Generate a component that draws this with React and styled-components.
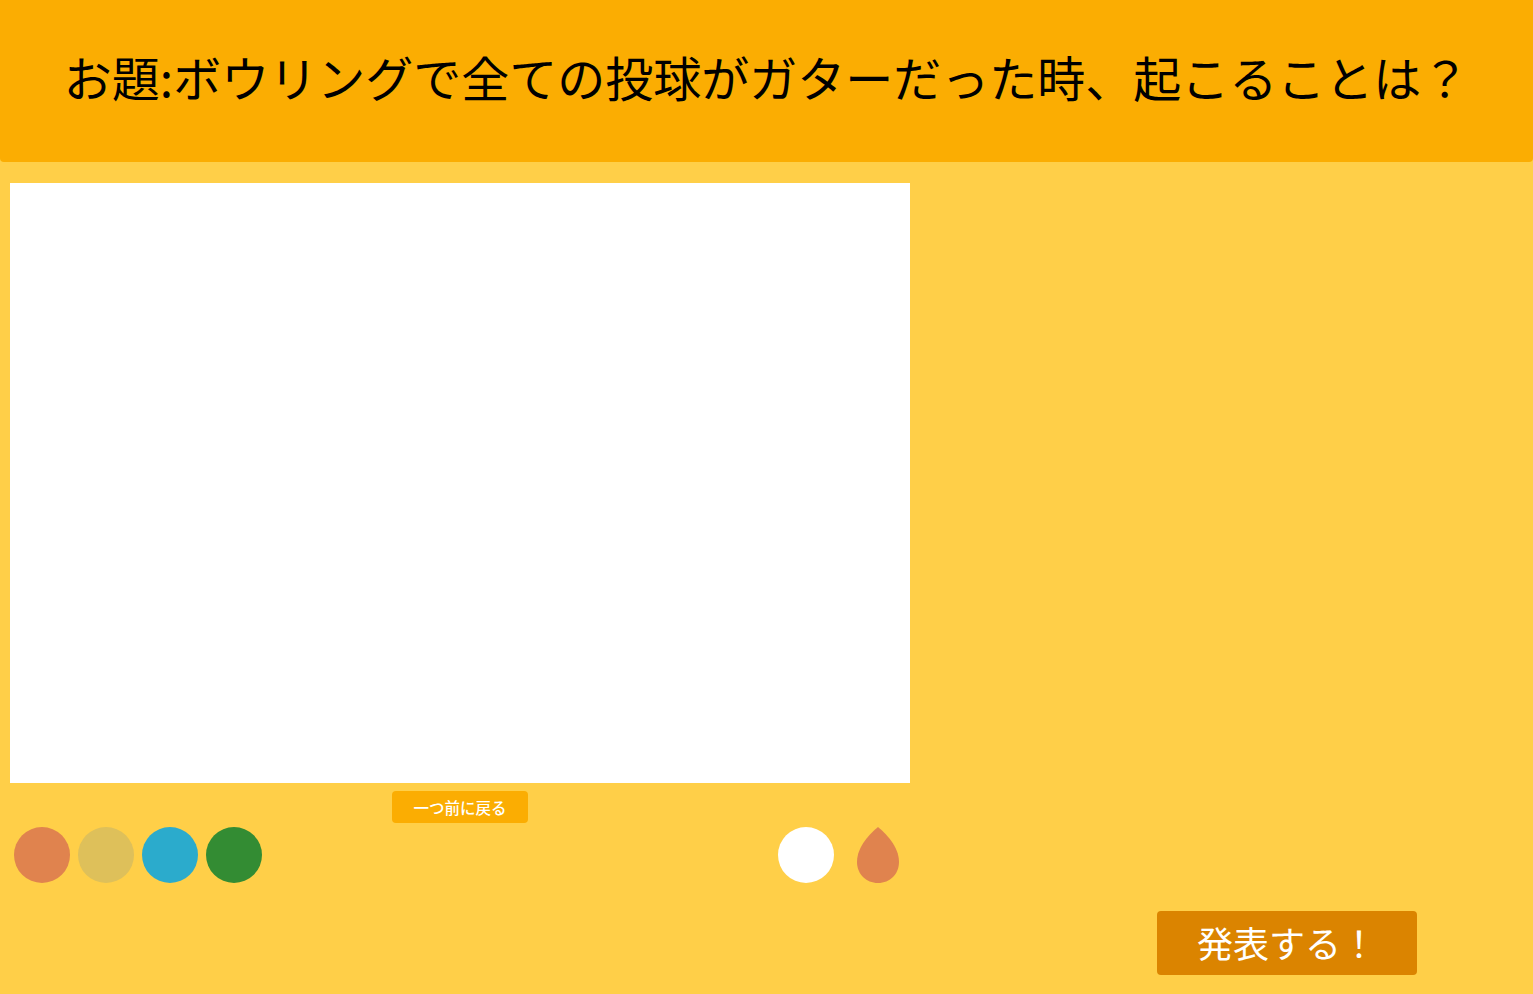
import React, { useState } from 'react'
import styled, { createGlobalStyle } from 'styled-components'

const GlobalStyle = createGlobalStyle`
  html, body {
    margin: 0;
    padding: 0;
    background: #ffcf48;
    font-family: "Noto Sans CJK JP", "Noto Sans", sans-serif;
  }
  * { box-sizing: border-box; }
`;

const colors = ["#e0834e", "#dec05a", "#2babcc", "#338c33"];

export default function App() {
  const [color, setColor] = useState(colors[0]);
  return (
    <Page>
      <GlobalStyle />
      <Header>
        <Title>お題:ボウリングで全ての投球がガターだった時、起こることは？</Title>
      </Header>
      <Main>
        <DrawColumn>
          <Canvas />
          <UndoButton>一つ前に戻る</UndoButton>
          <Palette>
            <Swatches>
              {colors.map((c) => (
                <Swatch key={c} color={c} onClick={() => setColor(c)} />
              ))}
            </Swatches>
            <Tools>
              <Swatch color="#ffffff" />
              <Drop viewBox="0 0 42 56">
                <path d="M21 0 C14 6 0 19 0 35 C0 47 9 56 21 56 C33 56 42 47 42 35 C42 19 28 6 21 0 Z" fill={color} />
              </Drop>
            </Tools>
          </Palette>
        </DrawColumn>
        <SideColumn>
          <SubmitButton>発表する！</SubmitButton>
        </SideColumn>
      </Main>
    </Page>
  )
}

const Page = styled.div`
  width: 100%;
  height: 994px;
  display: flex;
  flex-direction: column;
  overflow: hidden;
`;

const Header = styled.header`
  height: 162px;
  background: #fbad02;
  border-radius: 0 0 4px 4px;
  display: flex;
  align-items: center;
  justify-content: center;
  padding-bottom: 10px;
`;

const Title = styled.h1`
  margin: 0;
  font-size: 48px;
  font-weight: 400;
  color: #000;
  letter-spacing: 0;
`;

const Main = styled.main`
  flex: 1;
  display: flex;
`;

const DrawColumn = styled.div`
  width: 900px;
  margin-left: 10px;
  padding-top: 21px;
  display: flex;
  flex-direction: column;
  align-items: center;
`;

const Canvas = styled.div`
  width: 900px;
  height: 600px;
  background: #fff;
`;

const UndoButton = styled.button`
  margin-top: 8px;
  width: 136px;
  height: 32px;
  border: none;
  border-radius: 4px;
  background: #fbad02;
  color: #fff;
  font-family: inherit;
  font-size: 15.5px;
  font-weight: 500;
  cursor: pointer;
`;

const Palette = styled.div`
  width: 100%;
  margin-top: 4px;
  padding: 0 11px 0 4px;
  display: flex;
  justify-content: space-between;
  align-items: center;
`;

const Swatches = styled.div`
  display: flex;
  gap: 8px;
`;

const Tools = styled.div`
  display: flex;
  align-items: center;
  gap: 23px;
`;

const Swatch = styled.div`
  width: 56px;
  height: 56px;
  border-radius: 50%;
  background: ${({ color }) => color};
  cursor: pointer;
`;

const Drop = styled.svg`
  width: 42px;
  height: 56px;
  display: block;
`;

const SideColumn = styled.div`
  flex: 1;
  display: flex;
  align-items: flex-end;
  justify-content: flex-end;
  padding: 0 116px 19px 0;
`;

const SubmitButton = styled.button`
  width: 260px;
  height: 64px;
  padding-bottom: 4px;
  border: none;
  border-radius: 4px;
  background: #db8400;
  color: #fff;
  font-family: inherit;
  font-size: 36px;
  font-weight: 400;
  cursor: pointer;
`;
